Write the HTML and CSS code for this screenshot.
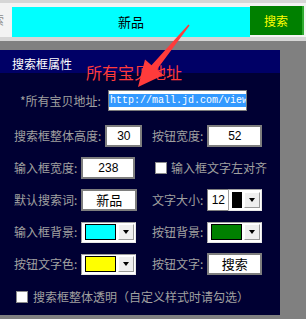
FILE: index.html
```html
<!DOCTYPE html>
<html lang="zh-CN">
<head>
    <meta charset="UTF-8">
    <title>搜索框属性</title>
    <link rel="stylesheet" href="styles.css">
</head>
<body>
<div class="page">
    <div class="topbar">
        <span class="cut">搜索</span>
        <div class="search-input">新品</div>
        <div class="search-btn">搜索</div>
    </div>

    <div class="panel">
        <div class="panel-head">搜索框属性</div>
        <div class="panel-body">
            <div class="row row-url">
                <span class="label">*所有宝贝地址:</span>
                <div class="url-box"><span class="sel">http://mall.jd.com/view</span></div>
            </div>
            <div class="row">
                <div class="field"><span class="label">搜索框整体高度:</span><div class="box w37">30</div></div>
                <div class="field"><span class="label">按钮宽度:</span><div class="box w55">52</div></div>
            </div>
            <div class="row">
                <div class="field"><span class="label">输入框宽度:</span><div class="box w54">238</div></div>
                <div class="field check-field"><span class="check"></span><span class="label">输入框文字左对齐</span></div>
            </div>
            <div class="row">
                <div class="field"><span class="label">默认搜索词:</span><div class="box w56 big">新品</div></div>
                <div class="field">
                    <span class="label">文字大小:</span>
                    <div class="box w21 small">12</div>
                    <div class="color-pick narrow"><span class="swatch" style="background:#000"></span><span class="drop"></span></div>
                </div>
            </div>
            <div class="row">
                <div class="field"><span class="label">输入框背景:</span>
                    <div class="color-pick"><span class="swatch" style="background:#00ffff"></span><span class="drop"></span></div>
                </div>
                <div class="field"><span class="label">按钮背景:</span>
                    <div class="color-pick"><span class="swatch" style="background:#008000"></span><span class="drop"></span></div>
                </div>
            </div>
            <div class="row">
                <div class="field"><span class="label">按钮文字色:</span>
                    <div class="color-pick"><span class="swatch" style="background:#ffff00"></span><span class="drop"></span></div>
                </div>
                <div class="field"><span class="label">按钮文字:</span><div class="box w55 big">搜索</div></div>
            </div>
            <div class="row row-last">
                <span class="check"></span><span class="label">搜索框整体透明（自定义样式时请勾选）</span>
            </div>
        </div>
    </div>

    <div class="note">所有宝贝地址</div>
    <svg class="arrow" width="306" height="120" viewBox="0 0 306 120">
        <polygon points="188.4,24.4 189.6,25.6 156.9,69.6 163.5,75 138,87 145,59.6 151.5,65.2" fill="#ff3b3b"/>
    </svg>
</div>
</body>
</html>
```

FILE: styles.css
```css
body {
    margin: 0;
    background: #808080;
    font-family: "Noto Sans CJK SC", "Liberation Sans", sans-serif;
    font-size: 12px;
}
.page {
    position: relative;
    height: 319px;
    overflow: hidden;
}

/* preview bar on top */
.topbar {
    height: 34px;
    background: #f3f3f3;
    border-top: 3px solid #d6d6d6;
    border-bottom: 4px solid #d6d6d6;
    display: flex;
    align-items: flex-start;
    overflow: hidden;
}
.cut {
    margin-left: -20px;
    margin-top: 10px;
    width: 24px;
    flex-shrink: 0;
    color: #8a8a8a;
    font-size: 12px;
    line-height: 14px;
}
.search-input {
    margin-left: 8px;
    margin-top: 4px;
    width: 238px;
    height: 30px;
    background: #00ffff;
    color: #000;
    font-size: 13px;
    line-height: 30px;
    text-align: center;
}
.search-btn {
    margin-top: 3px;
    width: 52px;
    height: 29px;
    background: #008000;
    border-right: 2px solid #2faa2f;
    color: #ffff00;
    font-size: 12px;
    line-height: 29px;
    text-align: center;
}

/* properties panel */
.panel {
    margin-top: 9px;
    width: 280px;
}
.panel-head {
    height: 19px;
    padding: 4px 0 0 12px;
    line-height: 19px;
    background: #000066;
    color: #fff;
}
.panel-body {
    height: 230px;
    padding-top: 12px;
    background: #000033;
}
.row {
    display: grid;
    grid-template-columns: 138px auto;
    align-items: center;
    height: 32px;
    padding-left: 14px;
}
.row-url {
    display: flex;
    height: 31px;
    margin-bottom: 4px;
    padding-left: 20px;
    gap: 7px;
}
.row-last {
    display: flex;
    height: 33px;
    padding-left: 16px;
    gap: 5px;
}
.field {
    display: flex;
    align-items: center;
    gap: 4px;
}
.check-field {
    padding-left: 3px;
}
.label {
    color: #a0a0a0;
    white-space: nowrap;
    line-height: 14px;
}
.url-box {
    box-sizing: border-box;
    width: 139px;
    height: 21px;
    padding: 3px 0;
    background: #fff;
    border: 1px solid #7a7a7a;
    overflow: hidden;
}
.sel {
    display: block;
    height: 13px;
    padding-left: 1px;
    background: #3399ff;
    color: #fff;
    font-family: "Liberation Mono", monospace;
    font-size: 10px;
    line-height: 13px;
    white-space: nowrap;
}
.box {
    box-sizing: border-box;
    height: 22px;
    background: #fff;
    border: 2px solid #7e7e7e;
    color: #000;
    text-align: center;
    line-height: 18px;
    font-family: "Liberation Sans", sans-serif;
}
.box.big {
    font-family: "Noto Sans CJK SC", sans-serif;
    font-size: 13px;
}
.box.small {
    border-width: 1px;
    border-right: 0;
    line-height: 20px;
}
.w21 { width: 21px; }
.w37 { width: 37px; }
.w54 { width: 54px; }
.w55 { width: 55px; }
.w56 { width: 56px; }

.check {
    box-sizing: border-box;
    width: 12px;
    height: 12px;
    background: #fff;
    border: 1px solid #8a8a8a;
    flex-shrink: 0;
}

/* colour combo */
.color-pick {
    box-sizing: border-box;
    width: 55px;
    height: 21px;
    display: flex;
    align-items: center;
    gap: 2px;
    padding: 0 1px 0 3px;
    background: #fff;
    border: 1px solid;
    border-color: #a0a0a0 #e8e8e8 #e8e8e8 #a0a0a0;
}
.color-pick.narrow {
    width: 34px;
    height: 22px;
    margin-left: -4px;
    padding-left: 3px;
}
.swatch {
    box-sizing: border-box;
    width: 31px;
    height: 16px;
    border: 1px solid #000;
    outline: 1px solid #fff;
}
.narrow .swatch {
    width: 10px;
}
.drop {
    position: relative;
    box-sizing: border-box;
    width: 17px;
    height: 16px;
    background: #efefef;
    border: 1px solid;
    border-color: #fff #9a9a9a #9a9a9a #fff;
}
.drop::after {
    content: "";
    position: absolute;
    left: 4px;
    top: 5px;
    border-left: 3px solid transparent;
    border-right: 3px solid transparent;
    border-top: 4px solid #000;
}

/* annotation overlay */
.note {
    position: absolute;
    left: 86px;
    top: 63px;
    color: #ff3b3b;
    font-size: 16px;
    line-height: 18px;
}
.arrow {
    position: absolute;
    left: 0;
    top: 0;
}
```
